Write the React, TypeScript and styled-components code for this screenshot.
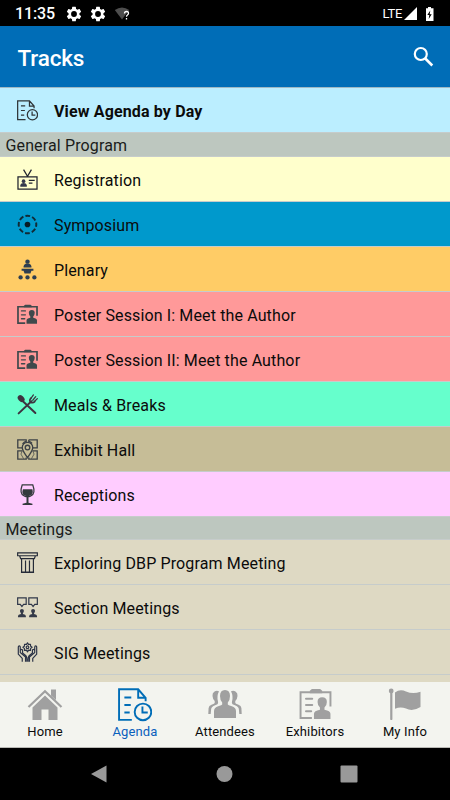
import React from "react";
import styled, { createGlobalStyle } from "styled-components";

const GlobalStyle = createGlobalStyle`
  * { box-sizing: border-box; }
  body { margin: 0; background: #000; font-family: Roboto, sans-serif; overflow: hidden; }
  svg { display: block; flex: none; }
`;

const Screen = styled.div`
  width: 450px;
  height: 800px;
  display: flex;
  flex-direction: column;
  overflow: hidden;
  background: #000;
`;

const StatusBar = styled.div`
  height: 26px;
  flex: none;
  display: flex;
  align-items: center;
  padding: 1px 14px 0 15px;
  color: #fff;
`;

const Clock = styled.span`
  width: 51px;
  font-size: 16px;
  font-weight: 500;
  letter-spacing: -0.1px;
`;

const StatusIcons = styled.div`
  display: flex;
  align-items: center;
  gap: 8px;
  flex: 1;
`;

const Network = styled.div`
  display: flex;
  align-items: center;
  font-size: 13px;
  letter-spacing: -0.3px;
  gap: 2px;
`;

const Header = styled.header`
  height: 61px;
  flex: none;
  display: flex;
  align-items: center;
  justify-content: space-between;
  padding: 1px 16px 0 17.5px;
  background: #006db7;
  color: #fff;
`;

const Title = styled.h1`
  margin: 0;
  padding-top: 1px;
  font-size: 22.5px;
  line-height: 28px;
  font-weight: 500;
  letter-spacing: -0.15px;
`;

const List = styled.main`
  height: 595px;
  flex: none;
  overflow: hidden;
  border-top: 1px solid #9fb9c4;
`;

const Row = styled.div<{ $bg: string; $bold?: boolean }>`
  height: 45px;
  display: flex;
  align-items: center;
  gap: 16px;
  padding: 1px 16px 0 17px;
  background: ${(p) => p.$bg};
  border-bottom: 1px solid #c6cccb;
  color: #0b0b0b;
  font-size: 16px;
  font-weight: ${(p) => (p.$bold ? 700 : 400)};
  letter-spacing: ${(p) => (p.$bold ? "0.14px" : "0.13px")};
  white-space: nowrap;
`;

const RowLabel = styled.span`
  padding-top: 2px;
`;

const Section = styled.h2<{ $height: number }>`
  margin: 0;
  height: ${(p) => p.$height}px;
  padding: 1px 0 0 5.5px;
  background: #bdc7bf;
  border-bottom: 1px solid #c6cccb;
  color: #1a1c1a;
  font-size: 16px;
  line-height: 24px;
  font-weight: 400;
  letter-spacing: 0.13px;
`;

const TabBar = styled.nav`
  height: 66px;
  flex: none;
  display: grid;
  grid-template-columns: repeat(5, 1fr);
  background: #f3f4ef;
  border-bottom: 1px solid #b9b9b5;
`;

const Tab = styled.div<{ $active?: boolean }>`
  display: flex;
  flex-direction: column;
  align-items: center;
  padding-top: 6px;
  color: ${(p) => (p.$active ? "#006db7" : "#a0a0a0")};
`;

const TabLabel = styled.span<{ $active?: boolean }>`
  color: ${(p) => (p.$active ? "#0a60bd" : "#0b0b0b")};
  font-size: 13px;
  line-height: 16px;
  margin-top: 2px;
  letter-spacing: 0.12px;
`;

const SystemNav = styled.div`
  height: 52px;
  flex: none;
  display: flex;
  justify-content: space-between;
  align-items: center;
  padding: 0 92px 0 90px;
`;

type IconProps = { size?: number; color?: string; weight?: number };

const Svg = ({ size = 21, children }: { size?: number; children: React.ReactNode }) => (
  <svg width={size} height={size} viewBox="0 0 32 32" fill="none">{children}</svg>
);

const AgendaIcon = ({ size, color = "currentColor", weight = 2 }: IconProps) => (
  <Svg size={size}>
    <g stroke={color} strokeWidth={weight}>
      <path d="M13 30H1V1.200h18l7 8v3.300M19 1.200v8h7M6 9h6.500M6 16h6M6 23h5" />
      <circle cx="23.500" cy="22.500" r="7.800" />
      <path d="M23 17.500v5.500h5" />
    </g>
  </Svg>
);

const BadgeIcon = () => (
  <Svg>
    <g stroke="#20232e" strokeWidth="1.900">
      <path d="M1.500 12h29v18.500h-29zM10 1l6 10 6-10M18 17.500h9M18 21.500h5.500" />
    </g>
    <circle cx="10" cy="18.500" r="2.800" fill="#34394b" />
    <path d="M5 27v-2.500q1-3 5-3t5 3V27z" fill="#34394b" />
  </Svg>
);

const TargetIcon = () => (
  <Svg>
    <circle cx="16" cy="16" r="13.400" stroke="#112a35" strokeWidth="3" strokeDasharray="7.2 3.324" strokeDashoffset="3.6" />
    <circle cx="16" cy="16" r="4.300" fill="#071c25" />
  </Svg>
);

const PodiumIcon = () => (
  <Svg>
    <g fill="#2e3e50">
      <circle cx="16" cy="4" r="3.400" />
      <path d="M10 13v-2q1-4 6-4t6 4v2zM7 15h18v3H7zM10 18h12l-1.500 4h-9z" />
      <circle cx="5.500" cy="28" r="3.300" /><circle cx="16" cy="28" r="3.300" /><circle cx="26.500" cy="28" r="3.300" />
    </g>
  </Svg>
);

const ExhibitorIcon = ({ size, color = "currentColor", weight = 2.6 }: IconProps) => (
  <Svg size={size}>
    <path d="M12.500 29H1.500V4.200h29V18" stroke={color} strokeWidth={weight} />
    <path d="M10.500 5V2.700l2-1.700h8l2 1.700V5z" fill={color} />
    <path d="M6.800 10.500h6M6.800 16.500h6M6.800 22.500h5" stroke={color} strokeWidth="2" strokeLinecap="round" />
    <path d="M18 13.500q0-4.500 4.500-4.500t4.500 4.500q0 3.500-2.300 5.500v2q5.800 1 5.800 4v5h-16v-5q0-3 5.800-4v-2q-2.300-2-2.300-5.500z" fill={color} />
  </Svg>
);

const CutleryIcon = () => (
  <Svg>
    <g stroke="#3d3340" strokeWidth="3" strokeLinecap="round">
      <path d="M9 11l19 18M2.500 29.500L22 11" />
      <path d="M21 6.500q-3 4 0 6t6-1" strokeWidth="2.600" />
      <path d="M21 7l4-5.500M24 9.500l4.500-5.500M26.500 11.500L31 7" strokeWidth="1.900" />
    </g>
    <ellipse cx="6.300" cy="7" rx="4.400" ry="6" transform="rotate(-42 6.300 7)" fill="#3d3340" />
  </Svg>
);

const MapPinIcon = () => (
  <Svg>
    <g stroke="#3c4146" strokeWidth="2">
      <path d="M9 7.500V7Q11 4.300 14 3.800V1.200H1.200v12.300h7M18 1.200h12.800v12.300h-7M18 1.200v2.600q3 .5 5 3M8 18H1.200v12.800H14v-2.500M24 18h6.800v12.800H18v-2.500" />
      <path d="M16 28.500C12 22 8 18 8 13a8 8 0 0116 0c0 5-4 9-8 15.500z" />
      <circle cx="16" cy="13" r="3.500" />
      <path d="M8 18l-2 5 4 7M24 18l2 5-4 7" strokeWidth="1.100" />
    </g>
  </Svg>
);

const WineIcon = () => (
  <Svg>
    <path d="M8 1.200h16q5 14-3 17-2.500 1.200-5 1.200t-5-1.200q-8-3-3-17z" stroke="#343a3d" strokeWidth="1.900" />
    <path d="M9 8h14.500q2 8-4 10-3.500 1.200-7 0-6-2-3.500-10zM14.500 19h3v9.500l6 1.500v2h-15v-2l6-1.500z" fill="#343a3d" />
  </Svg>
);

const ColumnIcon = () => (
  <Svg>
    <g stroke="#252b38" strokeWidth="1.800">
      <path d="M1 1.200h30v4.500H1zM4 5.700l1.500 4.500h21L28 5.700M7 11v19.500h18V11M6 31h20M13 13v17M19 13v17" />
    </g>
  </Svg>
);

const DiscussionIcon = () => (
  <Svg>
    {[0, 17].map((x) => (
      <g key={x} transform={`translate(${x} 0)`}>
        <path d="M1 1.200h13v10h-4l-2.500 3.300L5 11.200H1z" stroke="#30384a" strokeWidth="1.800" />
        <path d="M4.500 21q0-2.800 3-2.800t3 2.800q0 2.200-1.500 3.800v1q4.500.7 4.500 3V31h-12v-2.200q0-2.300 4.500-3v-1Q4.500 23.200 4.500 21z" fill="#353b49" />
      </g>
    ))}
  </Svg>
);

const HandsGearIcon = () => (
  <Svg>
    <g stroke="#2c3447" strokeWidth="1.800" strokeLinejoin="round">
      <path d="M16 1.200l1.500 2.500 3-.3.300 3L23 8l-2.200 1.700-.3 3-3-.3L16 15l-1.500-2.600-3 .3-.3-3L9 8l2.200-1.600.3-3 3 .3z" />
      <circle cx="16" cy="8" r="2" />
      <path d="M8 30v-5l-6-6.500V8q0-2 1.500-2T5 8v8l8 7v7M5.500 12q2.500-1.500 3 .5v4l5 4.500q2 2 1.500 9M24 30v-5l6-6.500V8q0-2-1.500-2T27 8v8l-8 7v7M26.500 12q-2.500-1.500-3 .5v4l-5 4.500q-2 2-1.500 9" />
    </g>
  </Svg>
);

const HomeIcon = () => (
  <svg width="36" height="34" viewBox="0 0 36 34">
    <path d="M1.500 19L18 3.200 34.500 19" fill="none" stroke="currentColor" strokeWidth="2.200" />
    <path d="M24 1.500h5V12l-5-4.500zM5.500 19.500L18 7.500l12.500 12V32h-9V21.500h-7V32h-9z" fill="currentColor" />
  </svg>
);

const AttendeesIcon = () => (
  <svg width="34" height="34" viewBox="0 0 34 34" fill="currentColor">
    <path d="M12 8q0-6 5-6t5 6q0 4.200-2.200 6.500v2q.2.800 4 1.800 4 1 4.200 4.700v7H6v-7q.2-3.700 4.200-4.700 3.800-1 4-1.800v-2Q12 12.200 12 8z" />
    <path d="M11 3.200Q8.500 2 6.200 3.700 4.200 5 4.500 8q.2 3 2.200 5v2q0 .8-3.200 1.800Q.8 17.800.6 20L.3 26h2.400l.4-4.500q.2-3 4-4.200 3.200-1 3-2.200l-.1-1.500Q8.500 8 11 3.200zM23 3.200q2.500-1.200 4.800.5 2 1.300 1.700 4.300-.2 3-2.200 5v2q0 .8 3.200 1.800 2.700 1 2.900 3.200l.3 6h-2.400l-.4-4.500q-.2-3-4-4.200-3.200-1-3-2.200l.1-1.500Q25.500 8 23 3.200z" />
  </svg>
);

const FlagIcon = () => (
  <svg width="34" height="34" viewBox="0 0 34 34" fill="currentColor">
    <circle cx="3.200" cy="3" r="2.400" />
    <path d="M2.200 4h2.200v27.500q-1.100 1-2.200 0zM7 4.500Q12 .5 18 3.500q7 3 14.500.2V19q-8 5-14.500 1.500-5.500-2-11 .2z" />
  </svg>
);

const GearIcon = () => (
  <svg width="16" height="16" viewBox="1 1 22 22" fill="#fff">
    <path d="M19.430 12.980c.04-.32.070-.64.070-.98s-.03-.66-.07-.98l2.110-1.650a.5.500 0 00.12-.64l-2-3.460a.5.500 0 00-.61-.22l-2.490 1a7.300 7.300 0 00-1.690-.98l-.38-2.650A.49.490 0 0014 2h-4a.49.490 0 00-.49.420l-.38 2.650c-.61.250-1.170.590-1.690.980l-2.490-1a.49.490 0 00-.61.220l-2 3.460a.49.490 0 00.12.640l2.110 1.650c-.04.320-.07.650-.07.980s.03.660.07.980l-2.110 1.650a.5.500 0 00-.12.640l2 3.460c.12.220.39.300.61.220l2.490-1c.52.400 1.080.730 1.690.980l.38 2.650c.03.240.24.420.49.420h4c.25 0 .46-.18.490-.42l.38-2.650c.61-.25 1.170-.59 1.690-.98l2.490 1c.23.090.49 0 .61-.22l2-3.460a.5.500 0 00-.12-.64zM12 16a4 4 0 110-8 4 4 0 010 8z" />
  </svg>
);

const WifiIcon = () => (
  <svg width="16" height="14" viewBox="0 0 16 14">
    <path d="M.8 3Q8-2 15.200 3L8 12.500z" fill="#4d4d4d" />
    <path d="M10.500 6.500q0-2 2-2t2 1.800q0 1-1 1.700t-1 1.700M12.500 11v1.600" fill="none" stroke="#fff" strokeWidth="1.300" />
  </svg>
);

const generalRows = [
  { label: "Registration", bg: "#ffffcc", icon: <BadgeIcon /> },
  { label: "Symposium", bg: "#0099cc", icon: <TargetIcon /> },
  { label: "Plenary", bg: "#ffcc66", icon: <PodiumIcon /> },
  { label: "Poster Session I: Meet the Author", bg: "#ff9999", icon: <ExhibitorIcon color="#3f494c" /> },
  { label: "Poster Session II: Meet the Author", bg: "#ff9999", icon: <ExhibitorIcon color="#3f494c" /> },
  { label: "Meals & Breaks", bg: "#66ffcc", icon: <CutleryIcon /> },
  { label: "Exhibit Hall", bg: "#c6bd97", icon: <MapPinIcon /> },
  { label: "Receptions", bg: "#ffccff", icon: <WineIcon /> },
];

const meetingRows = [
  { label: "Exploring DBP Program Meeting", bg: "#ded9c3", icon: <ColumnIcon /> },
  { label: "Section Meetings", bg: "#ded9c3", icon: <DiscussionIcon /> },
  { label: "SIG Meetings", bg: "#ded9c3", icon: <HandsGearIcon /> },
  { label: "", bg: "#ded9c3", icon: null },
];

const tabs = [
  { label: "Home", icon: <HomeIcon /> },
  { label: "Agenda", icon: <AgendaIcon size={34} weight={1.8} />, active: true },
  { label: "Attendees", icon: <AttendeesIcon /> },
  { label: "Exhibitors", icon: <ExhibitorIcon size={33} weight={1.9} /> },
  { label: "My Info", icon: <FlagIcon /> },
];

const IconSlot = styled.div`
  height: 34px;
`;

export default function App() {
  return (
    <Screen>
      <GlobalStyle />
      <StatusBar>
        <Clock>11:35</Clock>
        <StatusIcons><GearIcon /><GearIcon /><WifiIcon /></StatusIcons>
        <Network>
          LTE
          <svg width="13" height="13" viewBox="0 0 14 14"><path d="M14 0v14H0z" fill="#fff" /></svg>
          <svg width="17" height="14" viewBox="1 0 17 14">
            <path d="M8 1.300h2V0h3v1.300h2.500V14H8z" fill="#fff" />
            <path d="M12.300 3.500L9.300 8h2l-.6 4 3-4.800h-2z" fill="#000" />
          </svg>
        </Network>
      </StatusBar>
      <Header>
        <Title>Tracks</Title>
        <svg width="22" height="22" viewBox="0 0 22 22" fill="none" stroke="#fff">
          <circle cx="8.800" cy="8" r="6" strokeWidth="2.200" />
          <path d="M13 12.300l7.300 7.200" strokeWidth="2.600" />
        </svg>
      </Header>
      <List>
        <Row $bg="#bbeeff" $bold>
          <AgendaIcon color="#2f3437" weight={1.9} />
          <RowLabel>View Agenda by Day</RowLabel>
        </Row>
        <Section $height={24}>General Program</Section>
        {generalRows.map((r) => (
          <Row key={r.label} $bg={r.bg}>{r.icon}<RowLabel>{r.label}</RowLabel></Row>
        ))}
        <Section $height={23}>Meetings</Section>
        {meetingRows.map((r) => (
          <Row key={r.label} $bg={r.bg}>{r.icon}<RowLabel>{r.label}</RowLabel></Row>
        ))}
      </List>
      <TabBar>
        {tabs.map((t) => (
          <Tab key={t.label} $active={t.active}>
            <IconSlot>{t.icon}</IconSlot>
            <TabLabel $active={t.active}>{t.label}</TabLabel>
          </Tab>
        ))}
      </TabBar>
      <SystemNav>
        <svg width="18" height="20" viewBox="0 0 18 20"><path d="M1 10L16.500 1.500v17z" fill="#999" /></svg>
        <svg width="18" height="18" viewBox="0 0 18 18"><circle cx="9.500" cy="9" r="8" fill="#999" /></svg>
        <svg width="18" height="18" viewBox="0 0 18 18"><rect x=".5" y=".5" width="17" height="17" rx="1" fill="#999" /></svg>
      </SystemNav>
    </Screen>
  );
}
